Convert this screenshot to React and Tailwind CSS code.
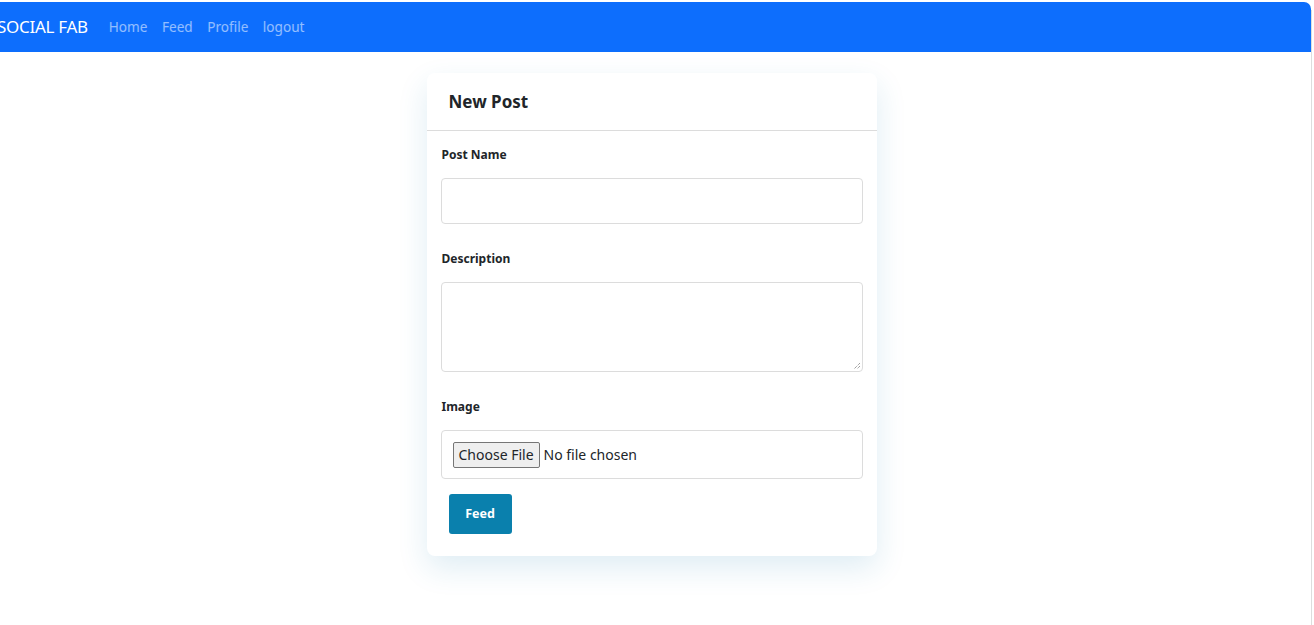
export default function App() {
  const font = { fontFamily: '"Noto Sans", "Open Sans", sans-serif' };
  return (
    <div className="w-[1314px] h-[625px] bg-white overflow-hidden flex flex-col" style={font}>
      <div className="h-[2px] bg-white"></div>
      <div className="flex-1 flex">
        <div className="w-[1311px] flex flex-col">
          <nav className="h-[50px] bg-[#0d6efd] rounded-tr-[7px] flex items-center">
            <span className="ml-[-3px] text-[17px] text-white tracking-[-0.3px] whitespace-nowrap">SOCIAL FAB</span>
            <div className="ml-[21px] flex gap-[14.5px] text-[13.6px] text-white/55">
              <span>Home</span>
              <span>Feed</span>
              <span>Profile</span>
              <span>logout</span>
            </div>
          </nav>
          <div className="flex-1 flex justify-center pt-[21px] pr-[1px]">
            <div className="ml-[-7px] w-[450px] h-[483px] bg-white rounded-[8px] shadow-[0_12px_30px_rgba(30,130,180,0.14)] flex flex-col">
              <div className="h-[58px] border-b border-[#dcdcdc] flex items-center pl-[22px]">
                <h2 className="text-[17px] font-bold text-[#212529]">New Post</h2>
              </div>
              <div className="px-[14px] pt-[15px] flex flex-col">
                <label className="pl-[1px] text-[12px] font-bold text-[#212529] h-[18px] leading-[18px]">Post Name</label>
                <div className="mt-[14px] h-[46px] border border-[#dcdcdc] rounded-[4px]"></div>
                <label className="pl-[1px] mt-[26px] text-[12px] font-bold text-[#212529] h-[18px] leading-[18px]">Description</label>
                <div className="mt-[14px] h-[90px] border border-[#dcdcdc] rounded-[4px] relative">
                  <svg className="absolute right-[1px] bottom-[1px]" width="8" height="8" viewBox="0 0 8 8">
                    <path d="M7 1 L1 7 M7 4 L4 7" stroke="#777" strokeWidth="1" strokeDasharray="1 1" />
                  </svg>
                </div>
                <label className="pl-[1px] mt-[26px] text-[12px] font-bold text-[#212529] h-[18px] leading-[18px]">Image</label>
                <div className="mt-[14px] h-[49px] border border-[#dcdcdc] rounded-[4px] flex items-center pl-[11px] text-[14px] text-[#212529]">
                  <span className="h-[26px] px-[5px] bg-[#efefef] border border-[#767676] rounded-[2px] flex items-center">Choose File</span>
                  <span className="ml-[4px]">No file chosen</span>
                </div>
                <div className="mt-[15px] pl-[8px]">
                  <button className="w-[63px] h-[40px] bg-[#0a80ad] rounded-[3px] text-white text-[12.5px] font-bold">Feed</button>
                </div>
              </div>
            </div>
          </div>
        </div>
        <div className="w-[1px] bg-[#dddddd] mt-[8px]"></div>
        <div className="w-[2px] bg-white"></div>
      </div>
    </div>
  );
}
